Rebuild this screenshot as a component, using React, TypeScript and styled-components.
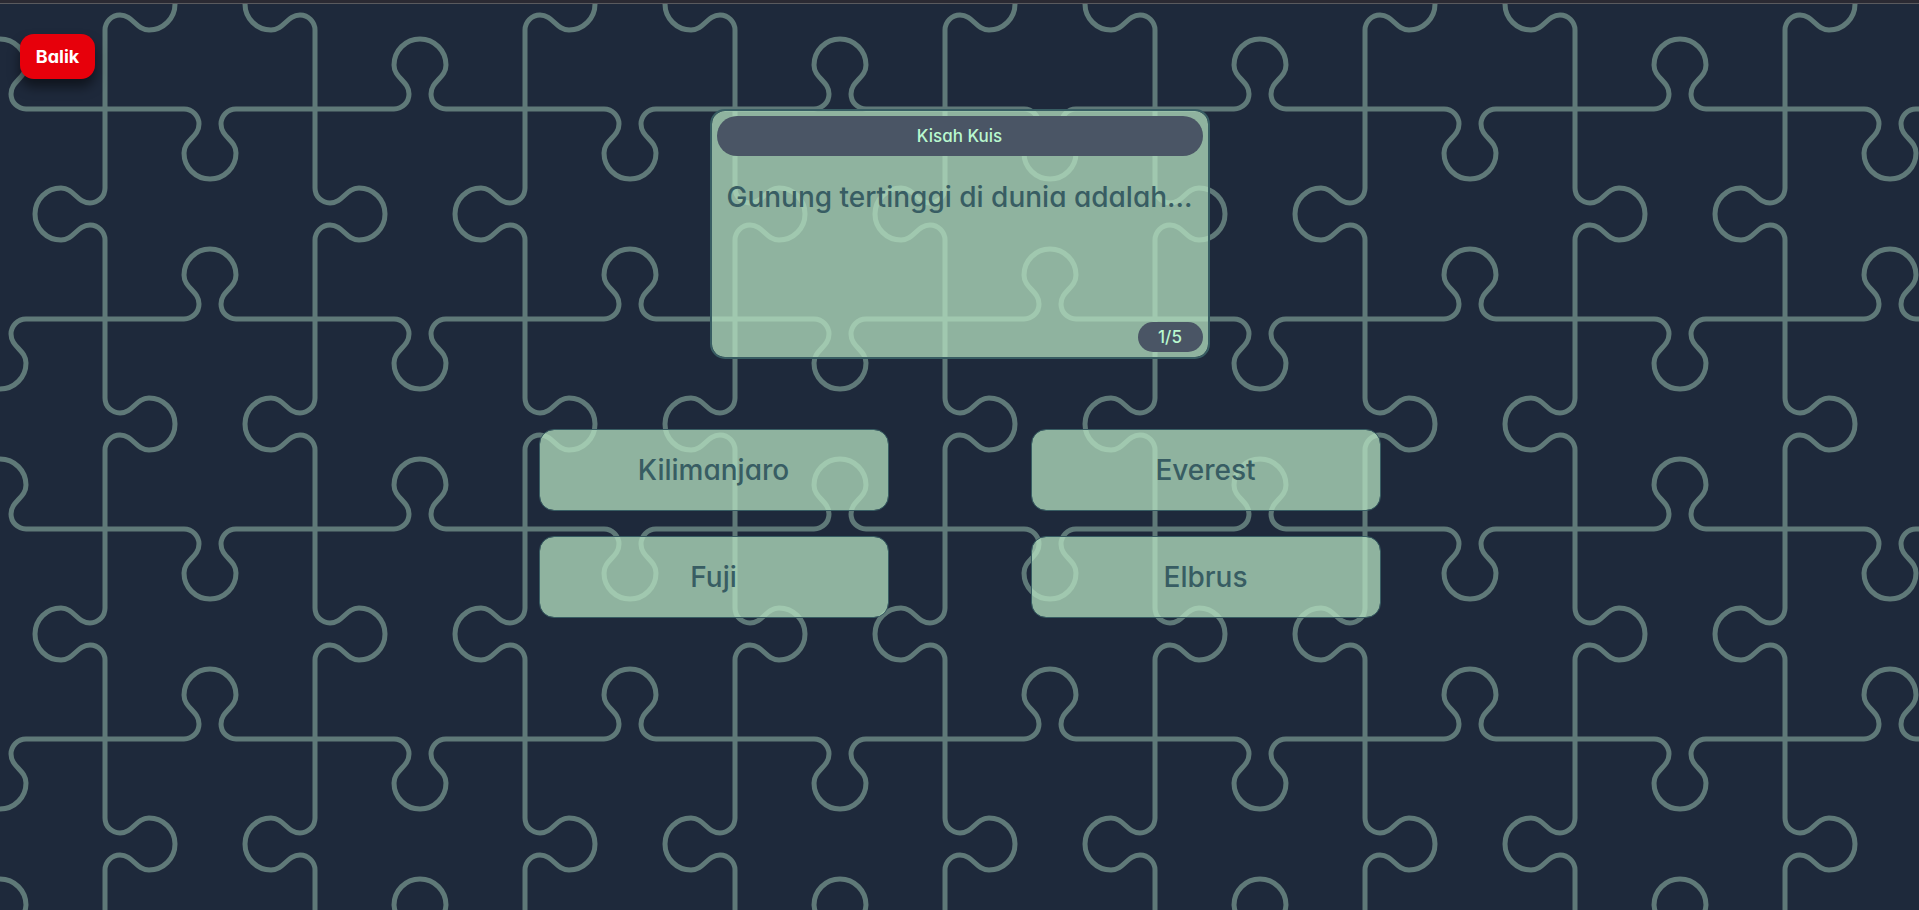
import React from "react";
import styled, { createGlobalStyle } from "styled-components";

const lineColor = "#5f7978";
const family = 'Inter, "Open Sans", sans-serif';

/* Knob hanging below a horizontal seam, centred on x = 210, seam at y = 0. */
const knob =
  "M105 0H184A15 15 0 0 1 199 15C199 28 184 31 184 44A26 26 0 0 0 236 44C236 31 221 28 221 15A15 15 0 0 1 236 0H315";

const seam = (transform: string) => `<path transform='${transform}' d='${knob}'/>`;

/* One 420px repeat: four horizontal and four vertical seams, each with a knob. */
const tile = [
  seam("translate(0 105)"),
  seam("translate(0 315) scale(1 -1)"),
  seam("translate(210 105) scale(1 -1)"),
  seam("translate(-210 105) scale(1 -1)"),
  seam("translate(210 315)"),
  seam("translate(-210 315)"),
  seam("translate(105 0) rotate(90)"),
  seam("translate(315 0) scale(-1 1) rotate(90)"),
  seam("translate(105 -210) scale(-1 1) rotate(90)"),
  seam("translate(105 210) scale(-1 1) rotate(90)"),
  seam("translate(315 -210) rotate(90)"),
  seam("translate(315 210) rotate(90)"),
].join("");

const jigsaw = `url("data:image/svg+xml,${encodeURIComponent(
  `<svg xmlns='http://www.w3.org/2000/svg' width='420' height='420' viewBox='0 0 420 420'><g fill='none' stroke='${lineColor}' stroke-width='5'>${tile}</g></svg>`
)}")`;

const GlobalStyle = createGlobalStyle`
  *, *::before, *::after { box-sizing: border-box; }
  body {
    margin: 0;
    background: #1e293b;
    font-family: ${family};
    font-feature-settings: "cv11";
  }
`;

const Shell = styled.div`
  min-height: 100vh;
  display: flex;
  flex-direction: column;
`;

const TopEdge = styled.div`
  height: 4px;
  background: #2b2a33;
  border-bottom: 1px solid #5a5a5e;
`;

const Page = styled.main`
  flex: 1;
  display: flex;
  flex-direction: column;
  background: #1e293b ${() => jigsaw} 0 0 / 420px 420px;
`;

const Toolbar = styled.nav`
  display: flex;
  padding: 30px 20px;
`;

const BackButton = styled.button`
  width: 75px;
  height: 45px;
  padding: 0;
  border: 0;
  border-radius: 14px;
  background: #e7000b;
  color: #fff;
  font: 700 18px/24px ${family};
  font-feature-settings: inherit;
  box-shadow: 0 8px 12px rgba(0, 0, 0, 0.5);
  cursor: pointer;
`;

const Quiz = styled.section`
  display: flex;
  flex-direction: column;
  align-items: center;
  gap: 70px;
  padding: 0 20px;
`;

const QuestionCard = styled.article`
  display: flex;
  flex-direction: column;
  width: 100%;
  max-width: 500px;
  min-height: 250px;
  padding: 5px;
  border: 2px solid #385d63;
  border-radius: 15px;
  background: rgba(184, 228, 194, 0.74);
  background-clip: padding-box;
`;

const Title = styled.h1`
  margin: 0;
  border-radius: 20px;
  background: #4a5565;
  color: #b9f8cf;
  font-size: 17px;
  font-weight: 500;
  line-height: 40px;
  text-align: center;
`;

const Question = styled.p`
  flex: 1;
  margin: 0;
  padding: 21px 0;
  color: #385d63;
  font-size: 28px;
  font-weight: 500;
  line-height: 40px;
  text-align: center;
`;

const Progress = styled.span`
  align-self: flex-end;
  width: 65px;
  border-radius: 15px;
  background: #4a5565;
  color: #b9f8cf;
  font-size: 17px;
  font-weight: 500;
  line-height: 30px;
  text-align: center;
`;

const Answers = styled.div`
  display: grid;
  grid-template-columns: repeat(auto-fit, minmax(300px, 350px));
  justify-content: space-between;
  row-gap: 25px;
  width: 100%;
  max-width: 842px;
`;

const Answer = styled.button`
  height: 82px;
  border: 1px solid #385d63;
  border-radius: 15px;
  background: rgba(184, 228, 194, 0.74);
  background-clip: padding-box;
  color: #385d63;
  font: 500 28px/40px ${family};
  font-feature-settings: inherit;
  cursor: pointer;
`;

const choices = ["Kilimanjaro", "Everest", "Fuji", "Elbrus"];

export default function App() {
  return (
    <Shell>
      <GlobalStyle />
      <TopEdge />
      <Page>
        <Toolbar>
          <BackButton type="button">Balik</BackButton>
        </Toolbar>
        <Quiz>
          <QuestionCard>
            <Title>Kisah Kuis</Title>
            <Question>Gunung tertinggi di dunia adalah...</Question>
            <Progress>1/5</Progress>
          </QuestionCard>
          <Answers>
            {choices.map((choice) => (
              <Answer type="button" key={choice}>
                {choice}
              </Answer>
            ))}
          </Answers>
        </Quiz>
      </Page>
    </Shell>
  );
}
